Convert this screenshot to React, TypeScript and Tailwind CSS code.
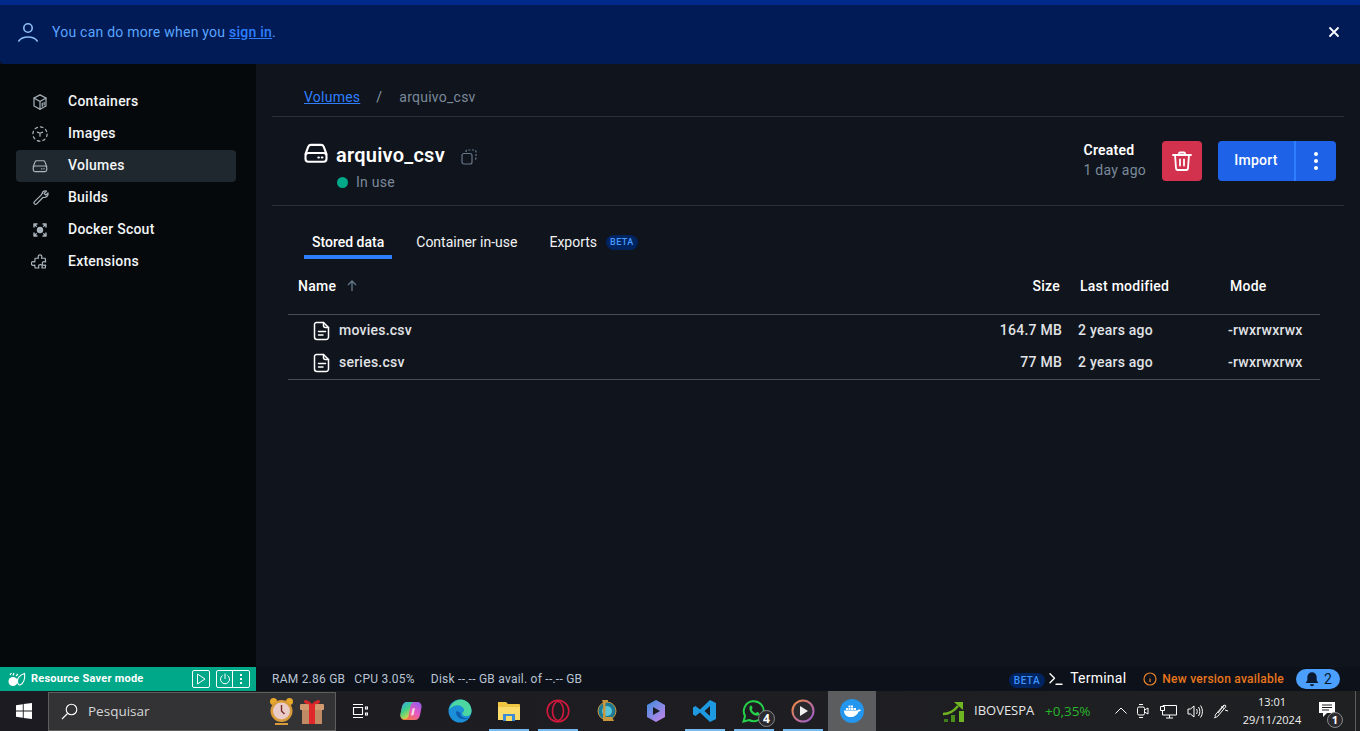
import React from "react";
import { Terminal } from "lucide-react";

const S = (p: React.SVGProps<SVGSVGElement> & { s?: number }) => {
  const { s = 16, children, ...r } = p;
  return (
    <svg width={s} height={s} viewBox="0 0 24 24" fill="none" stroke="currentColor" strokeWidth={1.6} strokeLinecap="round" strokeLinejoin="round" {...r}>
      {children}
    </svg>
  );
};

const Cube = () => (
  <S s={18} className="text-[#a9b4bd]"><path d="M12 2.500l8 4.200v10.500l-8 4.500-8-4.500V6.700z" /><path d="M4 6.700l8 4.500 8-4.500M12 11.200V21.700" /><path d="M15 13.500v4M17.500 12.500v3.500" /></S>
);
const Img = () => (
  <S s={18} className="text-[#a9b4bd]"><circle cx="12" cy="12" r="9.500" strokeDasharray="3.500 4" /><path d="M8.500 9.500l3.500 1.500 3.500-1.500M12 11v4" /></S>
);
const Drive = ({ s = 18, w = 1.6 }: { s?: number; w?: number }) => (
  <S s={s} strokeWidth={w}><path d="M3 13l2.400-6.500A2.500 2.500 0 0 1 7.800 5h8.400a2.500 2.500 0 0 1 2.400 1.500L21 13" /><rect x="3" y="12" width="18" height="7.500" rx="2.500" /><path d="M14 15.800h.5M17 15.800h.5" /></S>
);
const Wrench = () => (
  <S s={18} className="text-[#a9b4bd]"><path d="M14.700 6.300a5 5 0 0 1 6-3.500l-3.200 3.200 2.200 2.200 3-3a5 5 0 0 1-6.500 5.800l-8.600 8.800a2.100 2.100 0 0 1-3-3l8.900-8.600a5 5 0 0 1 1.200-1.900z" /></S>
);
const Scout = () => (
  <S s={18} className="text-[#a9b4bd]"><circle cx="12" cy="12" r="4.300" fill="currentColor" stroke="none" /><path d="M4 8V4h4M16 4h4v4M20 16v4h-4M8 20H4v-4M4 4l3 3M20 20l-3-3M4 20l3-3M20 4l-3 3" strokeWidth={1.900} /></S>
);
const Puzzle = () => (
  <S s={20} className="text-[#a9b4bd]"><path d="M9.500 5a2.500 2.500 0 0 1 5 0c0 1-.5 1.500-.5 2h5l.5 5c-.5 0-1-.5-2-.5a2.500 2.500 0 0 0 0 5c1 0 1.500-.5 2-.5l-.5 4h-4.500c0-.5.5-1 .5-2a2.500 2.500 0 0 0-5 0c0 1 .5 1.500.5 2H5.500L5 16c-.5 0-1 .5-2 .5a2.500 2.500 0 0 1 0-5c1 0 1.500.5 2 .5l.5-5H10c0-.5-.5-1-.5-2z" /></S>
);

const nav: [string, React.ReactNode, boolean][] = [
  ["Containers", <Cube />, false],
  ["Images", <Img />, false],
  ["Volumes", <span className="text-[#a9b4bd]"><Drive /></span>, true],
  ["Builds", <Wrench />, false],
  ["Docker Scout", <Scout />, false],
  ["Extensions", <Puzzle />, false],
];

const FileIcon = () => (
  <svg width="18" height="20" viewBox="0 0 18 20" fill="none" stroke="#fff" strokeWidth="1.500" strokeLinecap="round" strokeLinejoin="round" className="mt-[2px] shrink-0">
    <path d="M3.500 1.500h7l5 5v9.500a2.500 2.500 0 0 1-2.500 2.500H4a2.500 2.500 0 0 1-2.500-2.500V3.500a2 2 0 0 1 2-2z" />
    <path d="M10.500 1.500v3a2 2 0 0 0 2 2h3M5.500 10.500h7M5.500 14h4.500" />
  </svg>
);

const Row = ({ name, size }: { name: string; size: string }) => (
  <div className="flex h-8 items-center pb-[2px] text-[14px] font-medium text-[#e0e3e6]">
    <div className="flex flex-1 items-center gap-[8px] pl-[25px]"><FileIcon />{name}</div>
    <div className="w-[150px] pr-4 text-right">{size}</div>
    <div className="w-[150px]">2 years ago</div>
    <div className="w-[92px]">-rwxrwxrwx</div>
  </div>
);

const Divider = () => <div className="h-px bg-[#2b3036]" />;

const TaskSlot = ({ children, open = false, active = false, className = "" }: { children: React.ReactNode; open?: boolean; active?: boolean; className?: string }) => (
  <div className={`relative flex h-10 w-12 shrink-0 items-center justify-center ${active ? "bg-[#5c5d5f]" : ""} ${className}`}>
    {children}
    {open && <div className="absolute bottom-0 left-[4px] h-[2px] w-10 bg-[#76b9ed]" />}
  </div>
);

const Win = () => (
  <svg width="16" height="16" viewBox="0 0 16 16" fill="#fff"><path d="M0 2.300 6.800 1.300v6.300H0zM7.700 1.100 16 0v7.600H7.700zM0 8.500h6.800v6.300L0 13.800zM7.700 8.500H16V16l-8.300-1.100z" /></svg>
);

export default function App() {
  return (
    <div className="flex h-[731px] w-[1360px] flex-col overflow-hidden bg-[#10141c] font-['Roboto',sans-serif] tracking-[0.015em]">
      <div className="h-[5px] shrink-0 bg-[#012a8a]" />
      <div className="flex h-[59px] shrink-0 items-center justify-between rounded-bl-[4px] bg-[#001b55] pb-[5px] pl-[18px] pr-[20px]">
        <div className="flex items-center gap-[14px] text-[14px] text-[#5aa5ff]">
          <svg width="20" height="20" viewBox="0 0 20 20" fill="none" stroke="#8ebdf5" strokeWidth="1.600" strokeLinecap="round"><circle cx="10" cy="6" r="4.200" /><path d="M.800 19c2-3 5.500-4 9.200-4s7.200 1 9.200 4" /></svg>
          <span>You can do more when you <span className="font-medium text-[#2e7fff] underline">sign in</span>.</span>
        </div>
        <svg width="12" height="12" viewBox="0 0 12 12" stroke="#fff" strokeWidth="1.800" strokeLinecap="round"><path d="M2 2l8 8M10 2l-8 8" /></svg>
      </div>

      <div className="flex min-h-0 flex-1">
        <aside className="flex w-[256px] shrink-0 flex-col bg-[#05090c] pl-4 pr-5 pt-[22px]">
          {nav.map(([label, icon, on]) => (
            <div key={label} className={`flex h-8 items-center gap-[19px] rounded-[4px] pb-[2px] pl-[15px] text-[14px] font-medium text-[#f2f4f5] ${on ? "bg-[#1f282f]" : ""}`}>
              <span className="mt-[2px] flex w-[18px] justify-center">{icon}</span>
              {label}
            </div>
          ))}
        </aside>

        <main className="min-w-0 flex-1 px-4 text-white">
          <div className="flex h-[52px] items-center pl-8 pt-[14px] text-[14px]">
            <span className="text-[#2e7fff] underline">Volumes</span>
            <span className="ml-[16px] text-[#8a98a8]">/</span>
            <span className="ml-[17px] text-[#7b8a9b]">arquivo_csv</span>
          </div>
          <Divider />
          <div className="flex h-[88px] items-center justify-between pl-8 pr-2">
            <div className="flex flex-col self-start pt-[25px]">
              <div className="flex h-[26px] items-center">
                <span className="-ml-[2px] -mr-[2px] -mt-[4px] flex"><Drive s={28} w={1.800} /></span>
                <span className="ml-[8px] text-[20px] font-semibold leading-[26px]">arquivo_csv</span>
                <svg width="16" height="16" viewBox="0 0 16 16" fill="none" stroke="#66778a" strokeWidth="1.200" className="ml-[16px] mt-[3px]"><rect x="1" y="4.500" width="10" height="10.500" rx="2" /><path d="M5 3V2.500A1.500 1.500 0 0 1 6.500 1H13a2 2 0 0 1 2 2v6a1.500 1.500 0 0 1-1.500 1.500H13" strokeDasharray="2 1.500" /></svg>
              </div>
              <div className="ml-[33px] mt-[4px] flex items-center gap-[8px] text-[14px] text-[#7b8a9b]">
                <span className="size-[11px] rounded-full bg-[#00a88a]" />
                In use
              </div>
            </div>
            <div className="flex items-center">
              <div className="-mt-[3px] flex flex-col text-[14px] leading-[20px]">
                <span className="font-semibold text-white">Created</span>
                <span className="text-[#7b8a9b]">1 day ago</span>
              </div>
              <div className="ml-4 flex size-10 items-center justify-center rounded-[4px] bg-[#d3324f]">
                <svg width="22" height="22" viewBox="0 0 22 22" fill="none" stroke="#fff" strokeWidth="1.800" strokeLinecap="round" strokeLinejoin="round"><path d="M2 5h18M8 5V3.500A1 1 0 0 1 9 2.500h4a1 1 0 0 1 1 1V5M4 5l1 13a2 2 0 0 0 2 2h8a2 2 0 0 0 2-2l1-13M9 9.500v6M13 9.500v6" /></svg>
              </div>
              <div className="ml-4 flex h-10 items-stretch overflow-hidden rounded-[4px] bg-[#1e62e8]">
                <span className="flex w-[76px] items-center justify-center pb-[1px] text-[14px] font-medium">Import</span>
                <span className="w-[2px] bg-[#2e7fff]" />
                <span className="flex w-10 items-center justify-center">
                  <span className="flex flex-col gap-[3px]">
                    <i className="size-1 rounded-full bg-white" /><i className="size-1 rounded-full bg-white" /><i className="size-1 rounded-full bg-white" />
                  </span>
                </span>
              </div>
            </div>
          </div>
          <Divider />

          <div className="flex items-stretch gap-4 pl-8 pt-[20px] text-[14px] tracking-normal">
            <div className="flex h-[33px] items-center border-b-4 border-[#2e7fff] px-2 pt-[3px] font-medium">Stored data</div>
            <div className="flex h-[33px] items-center px-2 text-[#f2f4f5]">Container in-use</div>
            <div className="flex h-[33px] items-center gap-[9px] px-2 text-[#f2f4f5]">
              Exports
              <span className="flex h-[15px] items-center rounded-full bg-[#00245f] px-[4px] text-[9px] font-medium tracking-[.4px] text-[#4a9bff]">BETA</span>
            </div>
          </div>

          <div className="ml-4 mr-6 mt-[9px]">
            <div className="flex h-[36px] items-center text-[14px] font-medium text-white">
              <div className="flex flex-1 items-center pl-[10px]">
                Name
                <svg width="14" height="14" viewBox="0 0 14 14" fill="none" stroke="#66778a" strokeWidth="1.300" className="ml-[9px]"><path d="M7 12V2M3 6l4-4 4 4" /></svg>
              </div>
              <div className="w-[150px] pr-[18px] text-right">Size</div>
              <div className="w-[150px] pl-[2px]">Last modified</div>
              <div className="w-[92px] pl-[2px]">Mode</div>
            </div>
            <div className="mt-[10px] h-px bg-[#4a4e52]" />
            <Row name="movies.csv" size="164.7 MB" />
            <Row name="series.csv" size="77 MB" />
            <div className="h-px bg-[#4a4e52]" />
          </div>
        </main>
      </div>

      <div className="flex h-[24px] shrink-0 items-center bg-[#0d1119]">
        <div className="flex h-full w-[256px] shrink-0 items-center bg-[#00a88a] pl-[8px] pr-[6px] text-white">
          <svg width="18" height="15" viewBox="0 0 18 15" fill="none"><circle cx="5" cy="9.500" r="4.500" fill="#fff" /><path d="M2 3l1.500-2M5 3.500l1-2.500M8 4l2-2" stroke="#fff" strokeWidth="1.200" /><path d="M9.500 9c0-3.500 3-6 7-7.500.8 4.500-.5 10-4.500 11.500-1.500.4-2.500-1.500-2.500-4z" stroke="#fff" strokeWidth="1.100" fill="none" /></svg>
          <span className="ml-[5px] text-[11px] font-bold">Resource Saver mode</span>
          <span className="ml-auto flex size-[18px] items-center justify-center rounded-[2px] border border-white">
            <svg width="10" height="12" viewBox="0 0 10 12" fill="none" stroke="#fff"><path d="M1.500 1l7.500 5-7.500 5z" /></svg>
          </span>
          <span className="ml-[6px] flex h-[18px] w-[34px] rounded-[2px] border border-white">
            <span className="flex flex-1 items-center justify-center border-r border-white">
              <svg width="12" height="12" viewBox="0 0 12 12" fill="none" stroke="#fff"><path d="M3.500 2.500a4.500 4.500 0 1 0 5 0M6 .5v5.500" /></svg>
            </span>
            <span className="flex w-[16px] flex-col items-center justify-center gap-[2px]">
              <i className="size-[2px] bg-white" /><i className="size-[2px] bg-white" /><i className="size-[2px] bg-white" />
            </span>
          </span>
        </div>
        <div className="flex flex-1 items-center pl-4 pr-5 text-[12px] text-[#b8c4d4]">
          <span>RAM 2.86 GB</span>
          <span className="ml-[9px]">CPU 3.05%</span>
          <span className="ml-[16px]">Disk --.-- GB avail. of --.-- GB</span>
          <span className="ml-auto mt-[3px] flex h-[15px] items-center rounded-full bg-[#00245f] px-[5px] text-[10px] font-medium tracking-[.5px] text-[#3f93ff]">BETA</span>
          <span className="-mt-[2px] ml-[2px] flex items-center text-[14px] font-normal text-white">
            <Terminal size={18} strokeWidth={1.800} className="mr-[5px] mt-[2px]" /><span>Terminal</span>
          </span>
          <svg width="14" height="14" viewBox="0 0 14 14" fill="none" stroke="#e8822a" strokeWidth="1.200" className="ml-[17px]"><circle cx="7" cy="7" r="6" /><path d="M7 6.500V10M7 4v.300" /></svg>
          <span className="ml-[5px] font-medium text-[#e8761e]">New version available</span>
          <span className="ml-[12px] flex h-[20px] w-[44px] items-center justify-center gap-[4px] rounded-full bg-[#4a9fff] text-[14px] text-[#0b1a30]">
            <svg width="16" height="16" viewBox="0 0 24 24" fill="#0b1a30"><path d="M12 2a7 7 0 0 0-7 7v5l-2.500 4h19L19 14V9a7 7 0 0 0-7-7zM9 20a3 3 0 0 0 6 0z" /></svg>
            2
          </span>
        </div>
      </div>

      <div className="flex h-10 shrink-0 items-center bg-gradient-to-r from-[#1c1b21] to-[#1f2022] font-['Open_Sans',sans-serif] tracking-normal text-white">
        <div className="flex h-full w-[48px] shrink-0 items-center justify-center"><Win /></div>
        <div className="flex h-[39px] w-[288px] shrink-0 items-center self-end border border-[#5e5e5e] bg-[#333336] pl-[12px] pr-[11px]">
          <svg width="17" height="17" viewBox="0 0 17 17" fill="none" stroke="#fff" strokeWidth="1.100"><circle cx="10.500" cy="6.500" r="5.300" /><path d="M6.500 10.500l-5.500 5.500" /></svg>
          <span className="ml-[10px] text-[13.500px] text-[#d6d6d6]">Pesquisar</span>
          <svg width="25" height="29" viewBox="0 0 25 29" className="ml-auto"><circle cx="4.500" cy="4.500" r="3.500" fill="#e8a92a" /><circle cx="20.500" cy="4.500" r="3.500" fill="#e8a92a" /><circle cx="12.500" cy="14" r="11" fill="#d99a3a" /><circle cx="12.500" cy="14" r="8.500" fill="#e9ccc8" /><path d="M12.500 8v6l3 3" stroke="#7a2a2a" strokeWidth="1.400" fill="none" /><path d="M6 26h13v2H6z" fill="#d99a3a" /></svg>
          <svg width="24" height="25" viewBox="0 0 24 25" className="ml-[6px]"><rect x="2" y="9" width="20" height="16" fill="#c08a64" /><rect x="0" y="5" width="24" height="6" rx="1" fill="#d29a70" /><rect x="9" y="5" width="6" height="20" fill="#e0282a" /><path d="M12 5C8 0 3 0 4 3s5 2 8 2zm0 0c4-5 9-5 8-2s-5 2-8 2z" fill="#d3282a" /></svg>
        </div>
        <div className="flex items-center gap-px">
          <TaskSlot className="mr-[2px]">
            <svg width="16" height="16" viewBox="0 0 16 16" fill="none" stroke="#fff" strokeWidth="1.100"><path d="M1 1.500h10M1 14.500h10M1.500 4.500h9v7h-9zM13.500 4h2v2h-2zM13.500 10h2v2h-2z" /></svg>
          </TaskSlot>
          <TaskSlot>
            <svg width="24" height="24" viewBox="0 0 24 24"><defs><linearGradient id="cp" x1="0" y1="0" x2=".6" y2="1"><stop offset="0" stopColor="#2fa8f0" /><stop offset=".5" stopColor="#3fd08a" /><stop offset="1" stopColor="#f2d83a" /></linearGradient><linearGradient id="cq" x1="1" y1="0" x2=".3" y2="1"><stop offset="0" stopColor="#8a5cf0" /><stop offset=".55" stopColor="#e85ac0" /><stop offset="1" stopColor="#f27a3a" /></linearGradient></defs><path d="M8 3h10c3 0 5 2 4.500 5.500L21 16c-.5 3-2.500 5-5 5H6c-3 0-5-2-4.500-5.500L3 8c.5-3 2.500-5 5-5z" fill="url(#cq)" /><path d="M8 3h7c-2 .5-3 2-3.500 4L9.500 17c-.5 2-2 3-4 3-2.800 0-4.500-2-4-5L3 8c.5-3 2.500-5 5-5z" fill="url(#cp)" /><path d="M13.500 9.500l2.500-.5-1.500 7-2.500.5z" fill="#f7d9e6" /></svg>
          </TaskSlot>
          <TaskSlot>
            <svg width="24" height="24" viewBox="0 0 24 24"><circle cx="12" cy="12" r="11.500" fill="#1b8fd8" /><path d="M1 11C3 4 8 .5 12.500 .5 19 .5 23.500 5.500 23.500 12c0 3-2 5-5 5-3.500 0-4.500-1.500-4-3 .5-1.500 2-1.500 1.500-3.500C15 7 10 5 6 7c-2 1-4 2-5 4z" fill="#4cd6a0" /><path d="M8 13c0 5 5 8 10 7 2-.4 2.500-1 2-1.200-3 .8-7.500-.3-7.500-4 0-2-4.500-3.500-4.500-1.800z" fill="#0f5db0" /></svg>
          </TaskSlot>
          <TaskSlot open>
            <svg width="22" height="20" viewBox="0 0 22 20"><path d="M0 1h8l2 2h11a1 1 0 0 1 1 1v15H0z" fill="#f0c541" /><path d="M0 6h22v13H0z" fill="#fbdc6a" /><rect x="5" y="13" width="12" height="7" fill="#3d8dd6" /><rect x="8" y="15" width="6" height="5" fill="#fbdc6a" /></svg>
          </TaskSlot>
          <TaskSlot open>
            <svg width="24" height="24" viewBox="0 0 24 24" fill="none" stroke="#d2183c" strokeWidth="1.600"><circle cx="12" cy="12" r="10.800" /><ellipse cx="12" cy="12" rx="5.500" ry="9.500" /></svg>
          </TaskSlot>
          <TaskSlot>
            <svg width="20" height="24" viewBox="0 0 20 24"><circle cx="10" cy="12" r="9" fill="#1e7a94" stroke="#c7963f" strokeWidth="1" /><circle cx="10" cy="12" r="5" fill="#5cc6d8" /><path d="M5 1h6v2L8.500 4v14H15l2 4H6V4z" fill="#c7963f" /></svg>
          </TaskSlot>
          <TaskSlot>
            <svg width="20" height="24" viewBox="0 0 20 24"><defs><linearGradient id="cp2" x1="0" y1="0" x2=".8" y2="1"><stop offset="0" stopColor="#3a8fe0" /><stop offset="1" stopColor="#c084e8" /></linearGradient></defs><path d="M10 1l9 5v12l-9 5-9-5V6z" fill="url(#cp2)" /><path d="M7 8l7 4-7 4z" fill="#1c1c22" /></svg>
          </TaskSlot>
          <TaskSlot open>
            <svg width="24" height="24" viewBox="0 0 24 24"><path d="M17 1l6 3v16l-6 3L7 13.500 2.500 17 0 15.500V8.500L2.500 7 7 10.500z" fill="#1e9be0" /><path d="M17 7l-5.500 5 5.500 5z" fill="#1c1c22" /></svg>
          </TaskSlot>
          <TaskSlot open>
            <svg width="24" height="24" viewBox="0 0 24 24" fill="none"><path d="M1.500 22.500l1.500-5.500a10 10 0 1 1 4 4z" stroke="#25d04a" strokeWidth="2" /><path d="M8 7c1-1 2 0 2.500 1.500.3 1-1 1.500-.5 2.500.8 1.500 2 2.500 3.500 3 .8 0 1.200-1.500 2-1 1.500.6 2.500 1.500 1.500 2.800-1.500 1.500-4 1-6.500-.8C8 12.800 6.500 9.500 8 7z" fill="#25d04a" /></svg>
            <span className="absolute left-[28px] top-[19px] flex size-[17px] items-center justify-center rounded-full border border-[#888] bg-[#2b2b2f] text-[12px] font-bold">4</span>
          </TaskSlot>
          <TaskSlot open>
            <svg width="24" height="24" viewBox="0 0 24 24"><defs><linearGradient id="pl" x1="0" y1="0" x2="1" y2="1"><stop offset="0" stopColor="#f08a3c" /><stop offset="1" stopColor="#9a5ad8" /></linearGradient></defs><circle cx="12" cy="12" r="10.500" fill="#2a2a2e" stroke="url(#pl)" strokeWidth="2" /><path d="M9 7l8 5-8 5z" fill="#f0f0f0" /></svg>
          </TaskSlot>
          <TaskSlot active>
            <svg width="24" height="24" viewBox="0 0 24 24"><circle cx="12" cy="12" r="12" fill="#2496ed" /><path d="M4 11.500h13c1 0 1.500-.6 1.700-1.200.8 0 1.700.3 2.300 1-.7 1-1.700 1.200-2.500 1.200C17.500 16 14.500 18 10.500 18 6.500 18 4 15.500 4 11.500z" fill="#fff" /><path d="M6 9h2v2H6zM8.500 9h2v2h-2zM11 9h2v2h-2zM11 6.500h2v2h-2zM8.500 6.500h2v2h-2zM13.500 9H16v2h-2.500z" fill="#fff" /></svg>
          </TaskSlot>
        </div>
        <svg width="24" height="24" viewBox="0 0 24 24" className="ml-[66px] shrink-0"><path d="M1 15c6 0 11-3 15-8" stroke="#6fb521" strokeWidth="2.500" fill="none" /><path d="M12 3h9v8z" fill="#6fb521" /><rect x="2" y="20" width="4" height="3" fill="#3f7d1a" /><rect x="9" y="16" width="4" height="7" fill="#4a8f1c" /><rect x="17" y="12" width="5" height="11" fill="#6fb521" /></svg>
        <span className="ml-[8px] w-[71px] text-[13px] text-[#e6e6e6]">IBOVESPA</span>
        <span className="w-[46px] text-[13.500px] text-[#29b52c]">+0,35%</span>
        <div className="ml-[24px] flex w-[114px] shrink-0 items-center justify-between">
          <svg width="12" height="12" viewBox="0 0 12 12" fill="none" stroke="#fff" strokeWidth="1"><path d="M.500 8.500L6 3l5.500 5.500" /></svg>
          <svg width="12" height="16" viewBox="0 0 12 16" fill="none" stroke="#fff" strokeWidth="1"><rect x=".500" y="4" width="7" height="8" rx="1.500" /><path d="M7.500 7L11 5v6L7.500 9M2 1.500h4M2 14.500h4" /></svg>
          <svg width="17" height="15" viewBox="0 0 17 15" fill="none" stroke="#fff" strokeWidth="1"><path d="M3 3V1.500h13.500v9.500H4M.500 2.500h4v4h-4zM9.500 11v3M6 14h7M2.500 6.500V11H4" /></svg>
          <svg width="16" height="15" viewBox="0 0 16 15" fill="none" stroke="#fff" strokeWidth="1"><path d="M1 5h2.500L7 2v11L3.500 10H1zM9.500 5c1 1.500 1 3.500 0 5M11.500 3c1.800 2.500 1.800 6.500 0 9M13.500 1.500c2.500 3.500 2.500 8.500 0 12" /></svg>
          <svg width="16" height="16" viewBox="0 0 16 16" fill="none" stroke="#fff" strokeWidth="1"><path d="M11 2L3 11c-2 2 0 4 1.500 2.500L12.500 4c1-1.500-.5-2.500-1.500-1.500L5 10M12 7l3 1M1 15l2-1M8 3.500l3 2" /></svg>
        </div>
        <div className="ml-[14px] flex w-[58px] shrink-0 flex-col items-center whitespace-nowrap text-[11px] leading-[18px] text-[#f0f0f0]">
          <span>13:01</span>
          <span>29/11/2024</span>
        </div>
        <div className="relative ml-[18px] flex h-full w-[24px] shrink-0 items-center pb-[3px]">
          <svg width="16" height="15" viewBox="0 0 16 15" fill="#fff"><path d="M0 0h16v11H8l-4 4v-4H0z" /><path d="M3 3h10M3 5.500h10M3 8h7" stroke="#1c1c22" strokeWidth="1" /></svg>
          <span className="absolute left-[8px] top-[21px] flex size-4 items-center justify-center rounded-full border border-[#888] bg-[#2b2b2f] text-[11px] font-bold">1</span>
        </div>
        <div className="ml-[12px] h-full w-px bg-[#5c5d5f]" />
      </div>
    </div>
  );
}
